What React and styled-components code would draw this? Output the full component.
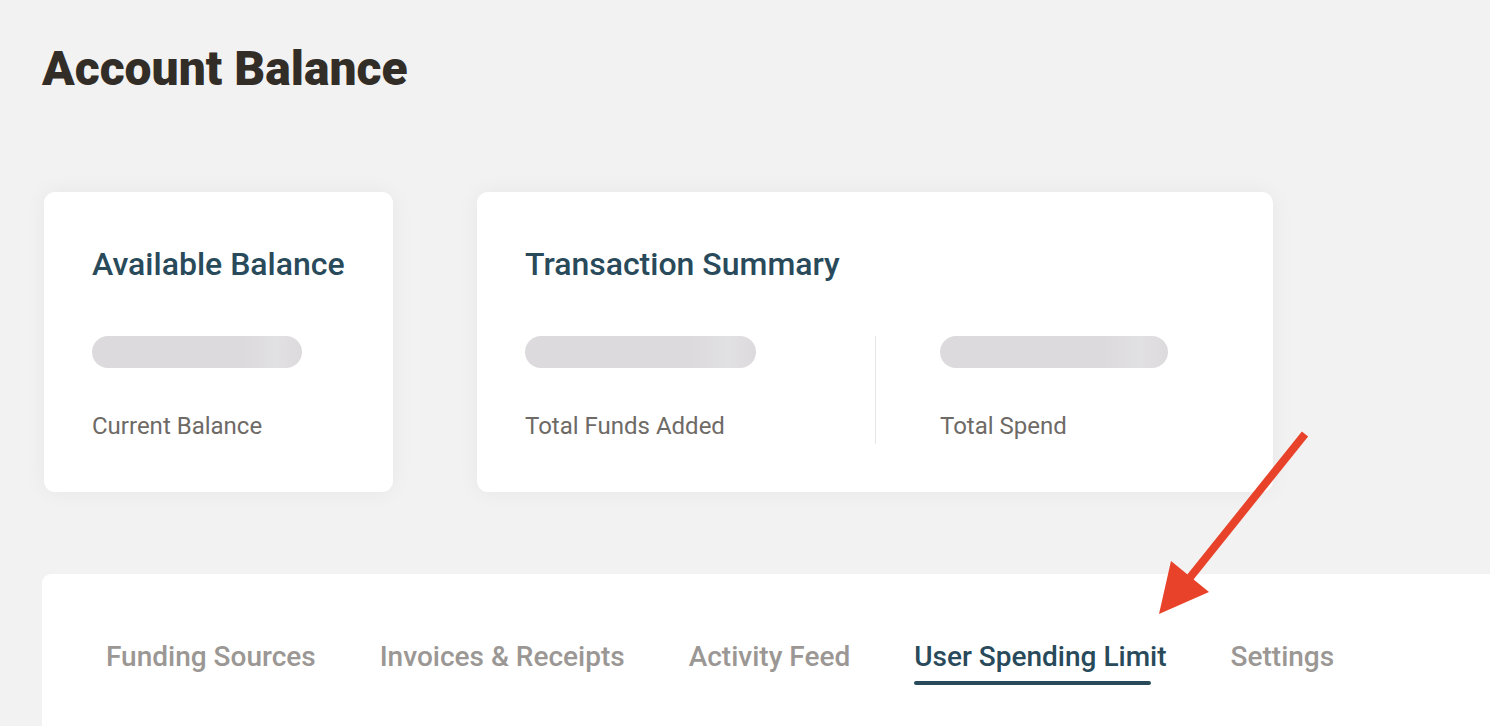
import * as React from "react";
import styled, { createGlobalStyle } from "styled-components";

const colors = {
  page: "#f2f2f2",
  heading: "#332d28",
  navy: "#284a5a",
  label: "#6e6a66",
  tab: "#9b9794",
  skeleton: "#dcdadd",
  divider: "#e6e6e6",
  arrow: "#e8422a",
};

const GlobalStyle = createGlobalStyle`
  html, body {
    margin: 0;
    padding: 0;
    background: ${colors.page};
    font-family: Roboto, "Liberation Sans", sans-serif;
    overflow: hidden;
  }
`;

const Page = styled.div`
  position: relative;
  height: 726px;
  padding: 45px 0 0 42px;
  box-sizing: border-box;
  overflow: hidden;
`;

const Title = styled.h1`
  margin: 0;
  font-size: 48px;
  line-height: 1;
  font-weight: 900;
  color: ${colors.heading};
`;

const Cards = styled.div`
  display: flex;
  gap: 84px;
  margin: 99px 0 0 2px;
`;

const Card = styled.div`
  width: ${(p) => p.$width}px;
  height: 300px;
  box-sizing: border-box;
  padding: 56px 48px 0;
  background: #fff;
  border-radius: 11px;
  box-shadow: 0 0 22px rgba(0, 0, 0, 0.05);
`;

const CardTitle = styled.h2`
  margin: 0;
  font-size: 32px;
  line-height: 1;
  font-weight: 500;
  color: ${colors.navy};
`;

const Stats = styled.div`
  display: flex;
  margin-top: 56px;
`;

const Stat = styled.div`
  display: flex;
  flex-direction: column;
  width: ${(p) => p.$width || "auto"};
  padding-bottom: 6px;
  ${(p) => p.$divided && `border-left: 1px solid ${colors.divider}; padding-left: 64px;`}
`;

const Skeleton = styled.div`
  width: ${(p) => p.$width}px;
  height: 32px;
  border-radius: 16px;
  background: linear-gradient(90deg, ${colors.skeleton} 0%, ${colors.skeleton} 72%, #e1e0e2 88%, ${colors.skeleton} 100%);
`;

const Label = styled.div`
  margin-top: 46px;
  font-size: 24px;
  line-height: 1;
  color: ${colors.label};
`;

const Panel = styled.div`
  margin-top: 82px;
  height: 200px;
  background: #fff;
  border-radius: 9px 0 0 0;
  padding: 0 0 0 64px;
`;

const Tabs = styled.nav`
  display: flex;
  gap: 64px;
  padding-top: 69px;
`;

const Tab = styled.div`
  position: relative;
  font-size: 28px;
  line-height: 1;
  font-weight: 500;
  color: ${(p) => (p.$active ? colors.navy : colors.tab)};

  ${(p) =>
    p.$active &&
    `
    &::after {
      content: "";
      position: absolute;
      left: 0;
      right: 16px;
      top: 38px;
      height: 4px;
      border-radius: 2px;
      background: ${colors.navy};
    }
  `}
`;

const Annotation = styled.svg`
  position: absolute;
  left: 0;
  top: 0;
  pointer-events: none;
`;

const tabs = ["Funding Sources", "Invoices & Receipts", "Activity Feed", "User Spending Limit", "Settings"];

const App = () => (
  <>
    <GlobalStyle />
    <Page>
      <Title>Account Balance</Title>
      <Cards>
        <Card $width={349}>
          <CardTitle>Available Balance</CardTitle>
          <Stats>
            <Stat>
              <Skeleton $width={210} />
              <Label>Current Balance</Label>
            </Stat>
          </Stats>
        </Card>
        <Card $width={796}>
          <CardTitle>Transaction Summary</CardTitle>
          <Stats>
            <Stat $width="350px">
              <Skeleton $width={231} />
              <Label>Total Funds Added</Label>
            </Stat>
            <Stat $divided>
              <Skeleton $width={228} />
              <Label>Total Spend</Label>
            </Stat>
          </Stats>
        </Card>
      </Cards>
      <Panel>
        <Tabs>
          {tabs.map((t) => (
            <Tab key={t} $active={t === "User Spending Limit"}>
              {t}
            </Tab>
          ))}
        </Tabs>
      </Panel>
      <Annotation width="1490" height="726" viewBox="0 0 1490 726">
        <line x1="1305" y1="434" x2="1188" y2="580" stroke={colors.arrow} strokeWidth="8" />
        <polygon points="1171,561 1209,592 1159,614" fill={colors.arrow} />
      </Annotation>
    </Page>
  </>
);

export default App;
